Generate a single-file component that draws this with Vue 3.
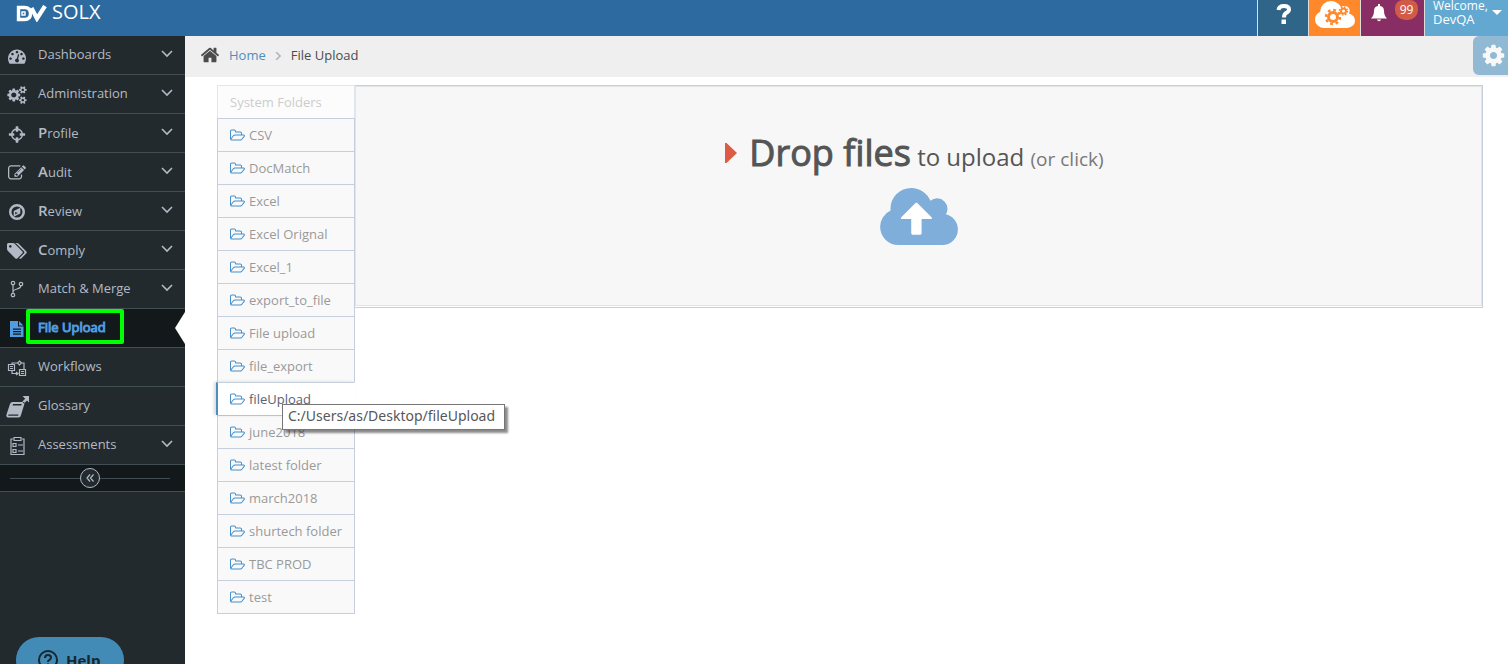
<script setup>
const icons = {
  dash: { box: '0 0 1792 1792', w: 18, h: 18, d: 'M384 1152q0-53-37.5-90.5t-90.5-37.5-90.5 37.5-37.5 90.5 37.5 90.5 90.5 37.5 90.5-37.5 37.5-90.5zm192-448q0-53-37.5-90.5t-90.5-37.5-90.5 37.5-37.5 90.5 37.5 90.5 90.5 37.5 90.5-37.5 37.5-90.5zm428 481l101-382q6-26-7.5-48.5t-38.5-29.5-48 6.5-30 39.5l-101 382q-60 5-107 43.5t-63 98.5q-20 77 20 146t117 89 146-20 89-117q16-60-6-117t-72-91zm660-33q0-53-37.5-90.5t-90.5-37.5-90.5 37.5-37.5 90.5 37.5 90.5 90.5 37.5 90.5-37.5 37.5-90.5zm-640-640q0-53-37.5-90.5t-90.5-37.5-90.5 37.5-37.5 90.5 37.5 90.5 90.5 37.5 90.5-37.5 37.5-90.5zm448 192q0-53-37.5-90.5t-90.5-37.5-90.5 37.5-37.5 90.5 37.5 90.5 90.5 37.5 90.5-37.5 37.5-90.5zm320 448q0 261-141 483-19 29-54 29h-1402q-35 0-54-29-141-221-141-483 0-182 71-348t191-286 286-191 348-71 348 71 286 191 191 286 71 348z' },
  cogs: { box: '0 0 1920 1792', w: 20, h: 18, d: 'M896 896q0-106-75-181t-181-75-181 75-75 181 75 181 181 75 181-75 75-181zm768 512q0-52-38-90t-90-38-90 38-38 90q0 53 37.5 90.5t90.5 37.5 90.5-37.5 37.5-90.5zm0-1024q0-52-38-90t-90-38-90 38-38 90q0 53 37.5 90.5t90.5 37.5 90.5-37.5 37.5-90.5zm-384 421v185q0 10-7 19.5t-16 10.5l-155 24q-11 35-32 76 34 48 90 115 7 11 7 20 0 12-7 19-23 30-82.5 89.5t-78.5 59.5q-11 0-21-7l-115-90q-37 19-77 31-11 108-23 155-7 24-30 24h-186q-11 0-20-7.5t-10-17.5l-23-153q-34-10-75-31l-118 89q-7 7-20 7-11 0-21-8-144-133-144-160 0-9 7-19 10-14 41-53t47-61q-23-44-35-82l-152-24q-10-1-17-9.5t-7-19.500v-185q0-10 7-19.500t16-10.500l155-24q11-35 32-76-34-48-90-115-7-11-7-20 0-12 7-20 22-30 82-89t79-59q11 0 21 7l115 90q34-18 77-32 11-108 23-154 7-24 30-24h186q11 0 20 7.500t10 17.500l23 153q34 10 75 31l118-89q8-7 20-7 11 0 21 8 144 133 144 160 0 8-7 19-12 16-42 54t-45 60q23 48 34 82l152 23q10 2 17 10.500t7 19.500zm640 533v140q0 16-149 31-12 27-30 52 51 113 51 138 0 4-4 7-122 71-124 71-8 0-46-47t-52-68q-20 2-30 2t-30-2q-14 21-52 68t-46 47q-2 0-124-71-4-3-4-7 0-25 51-138-18-25-30-52-149-15-149-31v-140q0-16 149-31 13-29 30-52-51-113-51-138 0-4 4-7 4-2 35-20t59-34 30-16q8 0 46 46.500t52 67.500q20-2 30-2t30 2q51-71 92-112l6-2q4 0 124 70 4 3 4 7 0 25-51 138 17 23 30 52 149 15 149 31zm0-1024v140q0 16-149 31-12 27-30 52 51 113 51 138 0 4-4 7-122 71-124 71-8 0-46-47t-52-68q-20 2-30 2t-30-2q-14 21-52 68t-46 47q-2 0-124-71-4-3-4-7 0-25 51-138-18-25-30-52-149-15-149-31v-140q0-16 149-31 13-29 30-52-51-113-51-138 0-4 4-7 4-2 35-20t59-34 30-16q8 0 46 46.500t52 67.500q20-2 30-2t30 2q51-71 92-112l6-2q4 0 124 70 4 3 4 7 0 25-51 138 17 23 30 52 149 15 149 31z' },
  cross: { box: '-64 0 1664 1792', w: 18, h: 19, d: 'M1197 1024h-109q-26 0-45-19t-19-45v-128q0-26 19-45t45-19h109q-32-108-112.5-188.500t-188.500-112.500v109q0 26-19 45t-45 19h-128q-26 0-45-19t-19-45v-109q-108 32-188.500 112.500t-112.500 188.500h109q26 0 45 19t19 45v128q0 26-19 45t-45 19h-109q32 108 112.500 188.500t188.500 112.500v-109q0-26 19-45t45-19h128q26 0 45 19t19 45v109q108-32 188.500-112.500t112.500-188.500zm339-192v128q0 26-19 45t-45 19h-143q-37 161-154.500 278.500t-278.500 154.500v143q0 26-19 45t-45 19h-128q-26 0-45-19t-19-45v-143q-161-37-278.500-154.500t-154.500-278.500h-143q-26 0-45-19t-19-45v-128q0-26 19-45t45-19h143q37-161 154.500-278.500t278.500-154.500v-143q0-26 19-45t45-19h128q26 0 45 19t19 45v143q161 37 278.500 154.500t154.500 278.500h143q26 0 45 19t19 45z' },
  edit: { box: '0 0 1792 1792', w: 18, h: 18, d: 'M888 1184l116-116-152-152-116 116v56h96v96h56zm440-720q-16-16-33 1l-350 350q-17 17-1 33t33-1l350-350q17-17 1-33zm80 594v190q0 119-84.500 203.500t-203.500 84.500h-832q-119 0-203.500-84.500t-84.500-203.500v-832q0-119 84.500-203.500t203.500-84.500h832q63 0 117 25 15 7 18 23 3 17-9 29l-49 49q-14 14-32 8-23-6-45-6h-832q-66 0-113 47t-47 113v832q0 66 47 113t113 47h832q66 0 113-47t47-113v-126q0-13 9-22l64-64q15-15 35-7t20 29zm-96-738l288 288-672 672h-288v-288zm444 132l-92 92-288-288 92-92q28-28 68-28t68 28l152 152q28 28 28 68t-28 68z' },
  compass: { box: '0 0 18 18', w: 18, h: 18, d: 'M9 1A8 8 0 1 0 9 17 8 8 0 1 0 9 1zM9 3.500A5.500 5.500 0 1 1 9 14.500 5.500 5.500 0 1 1 9 3.500zM12.300 4.800v5.800l-6.600 3.200V8zM7.200 8.900v2.600L9.800 10z' },
  tags: { box: '0 128 1920 1536', w: 20, h: 16, d: 'M448 448q0-53-37.500-90.500t-90.500-37.500-90.500 37.500-37.500 90.500 37.500 90.500 90.500 37.500 90.500-37.500 37.500-90.500zm1067 576q0 53-37 90l-491 492q-39 37-91 37-53 0-90-37l-715-716q-38-37-64.500-101t-26.500-117v-416q0-52 38-90t90-38h416q53 0 117 26.500t102 64.500l715 714q37 39 37 91zm384 0q0 53-37 90l-491 492q-39 37-91 37-36 0-59-14t-53-45l470-470q37-37 37-90 0-52-37-91l-715-714q-38-38-102-64.500t-117-26.500h224q53 0 117 26.500t102 64.500l715 714q37 39 37 91z' },
  fork: { box: '0 0 18 20', w: 18, h: 20, line: 'M5 4v10M5 12q0-2 4-3t4-4M3.300 3a1.700 1.700 0 1 0 3.400 0a1.700 1.700 0 1 0-3.400 0M3.300 15a1.700 1.700 0 1 0 3.400 0a1.700 1.700 0 1 0-3.400 0M11.300 4a1.700 1.700 0 1 0 3.400 0a1.700 1.700 0 1 0-3.400 0' },
  file: { box: '0 0 18 18', w: 18, h: 18, d: 'M2 1h8v5.500h5.500V17H2zM11 1l4.500 4.500H11zM5 8.500v1.200h8V8.500zM5 11v1.200h8V11zM5 13.500v1.200h8v-1.200z' },
  flow: { box: '0 0 20 18', w: 20, h: 18, line: 'M1.500 5.500h6v6h-6zM3 7.500h3M3 9.500h3M12.500 10.500h6v6h-6zM14 12.500h3M14 14.500h3M12.500 2L14.500 4 12.500 6 10.500 4zM5 5V4h5M15 4h2v6M5 12v2.500h5M9 13l2 1.500L9 16' },
  book: { box: '0 0 24 24', w: 24, h: 24, d: 'M7.500 7h11q1.500 0 1 1.500L16 20q-.5 2.500-2.500 2.500H3Q.8 22 1.500 19.500l3.500-10.500Q5.700 7 7.500 7zM8 9l-.5 1.500h8.800l.5-1.500zM3.500 19.500l-.4 1.300h10l.4-1.300zM17.500 1H24v6.500l-2-2-3 3-1.800-1.800 3-3z' },
  list: { box: '0 0 18 20', w: 18, h: 20, line: 'M5 3H3v15.500h13V3h-2M6 1.500h7v3H6zM5 7.500h3v3H5zM5 13.500h3v3H5zM10 9h5M10 15h5' },
  folder: 'M1781 1000q0-35-53-35h-1088q-40 0-85.500 21.500t-71.500 52.500l-294 363q-18 24-18 40 0 35 53 35h1088q40 0 86-22t71-53l294-363q18-22 18-39zm-1141-163h768v-160q0-40-28-68t-68-28h-576q-40 0-68-28t-28-68v-64q0-40-28-68t-68-28h-320q-40 0-68 28t-28 68v853l256-315q44-53 116-87.500t140-34.500zm1269 163q0 62-46 120l-295 363q-43 53-116 87.500t-140 34.500h-1088q-92 0-158-66t-66-158v-960q0-92 66-158t158-66h320q92 0 158 66t66 158v32h544q92 0 158 66t66 158v160h192q54 0 99 24.500t67 70.500q15 32 15 68z',
  home: 'M1472 992v480q0 26-19 45t-45 19h-384v-384h-256v384h-384q-26 0-45-19t-19-45v-480q0-1 .5-3t.5-3l575-474 575 474q1 2 1 6zm223-69l-62 74q-8 9-21 11h-3q-13 0-21-7l-692-577-692 577q-12 8-24 7-13-2-21-11l-62-74q-8-10-7-23.500t11-21.500l719-599q32-26 76-26t76 26l244 204v-195q0-14 9-23t23-9h192q14 0 23 9t9 23v408l219 182q10 8 11 21.500t-7 23.500z',
  cog: 'M1152 896q0-106-75-181t-181-75-181 75-75 181 75 181 181 75 181-75 75-181zm512-109v222q0 12-8 23t-20 13l-185 28q-19 54-39 91 35 50 107 138 10 12 10 25t-9 23q-27 37-99 108t-94 71q-12 0-26-9l-138-108q-44 23-91 38-16 136-29 186-7 28-36 28h-222q-14 0-24.500-8.500t-11.500-21.500l-28-184q-49-16-90-37l-141 107q-10 9-25 9-14 0-25-11-126-114-165-168-7-10-7-23 0-12 8-23 15-21 51-66.500t54-70.500q-27-50-41-99l-183-27q-13-2-21-12.500t-8-23.500v-222q0-12 8-23t19-13l186-28q14-46 39-92-40-57-107-138-10-12-10-24 0-10 9-23 26-36 98.500-107.500t94.500-71.500q13 0 26 10l138 107q44-23 91-38 16-136 29-186 7-28 36-28h222q14 0 24.500 8.500t11.500 21.500l28 184q49 16 90 37l142-107q9-9 24-9 13 0 25 10 129 119 165 170 7 8 7 22 0 12-8 23-15 21-51 66.500t-54 70.500q26 50 41 98l183 28q13 2 21 12.500t8 23.500z',
  cloud: 'M1920 1152q0 159-112.500 271.500t-271.500 112.500h-1088q-185 0-316.500-131.500t-131.500-316.500q0-130 70-240t188-165q-2-30-2-43 0-212 150-362t362-150q156 0 285.500 87t188.500 231q71-62 166-62 106 0 181 75t75 181q0 76-41 138 130 31 213.500 135.500t83.500 238.500z'
}

const nav = [
  { label: 'Dashboards', icon: 'dash', sub: true },
  { label: 'Administration', icon: 'cogs', sub: true },
  { key: 'P', label: 'rofile', icon: 'cross', sub: true },
  { key: 'A', label: 'udit', icon: 'edit', sub: true },
  { key: 'R', label: 'eview', icon: 'compass', sub: true },
  { key: 'C', label: 'omply', icon: 'tags', sub: true },
  { label: 'Match & Merge', icon: 'fork', sub: true },
  { label: 'File Upload', icon: 'file', active: true },
  { label: 'Workflows', icon: 'flow' },
  { label: 'Glossary', icon: 'book' },
  { label: 'Assessments', icon: 'list', sub: true }
]

const folders = ['CSV', 'DocMatch', 'Excel', 'Excel Orignal', 'Excel_1', 'export_to_file', 'File upload', 'file_export', 'fileUpload', 'june2018', 'latest folder', 'march2018', 'shurtech folder', 'TBC PROD', 'test']
</script>

<template>
  <div class="page">
    <header class="topbar">
      <a class="brand" href="#">
        <svg width="31" height="17" viewBox="0 0 31 17" fill="none" stroke="#fff" aria-hidden="true">
          <path d="M2.500 14.500v-12h6q6 0 6 6t-6 6z" stroke-width="3.400" />
          <path d="M6 7h3v3H6z" stroke-width="1.400" />
          <path d="M15.500 3l5.500 10.500L29 1" stroke-width="4.200" />
        </svg>
        <span>SOLX</span>
      </a>
      <div class="tools">
        <button class="tool help-tool" aria-label="Help topics">
          <svg width="16" height="22" viewBox="0 0 16 22"><path d="M2.500 7q.5-4 5.500-4 5 0 5 3.500 0 2-2.500 3.300T8 14.500" fill="none" stroke="#fff" stroke-width="4" /><path d="M5.500 16.500H10V21H5.500z" fill="#fff" /></svg>
        </button>
        <button class="tool cloud-tool" aria-label="Cloud jobs">
          <svg width="40" height="27" viewBox="0 128 1920 1408" preserveAspectRatio="none"><path :d="icons.cloud" fill="#fff" /></svg>
          <svg class="cloud-cogs" width="26" height="24" viewBox="0 0 26 24" fill="none" stroke="#ff892a">
            <circle cx="10" cy="14" r="4.500" stroke-width="3" /><circle cx="10" cy="14" r="7" stroke-width="2.500" stroke-dasharray="2.750" />
            <circle cx="20.500" cy="8" r="2.500" stroke-width="2" /><circle cx="20.500" cy="8" r="4" stroke-width="1.500" stroke-dasharray="1.570" />
          </svg>
        </button>
        <button class="tool bell-tool" aria-label="Notifications, 99">
          <svg width="16" height="18" viewBox="0 0 16 18" fill="#fff"><path d="M7 0h2v2q4 .7 4 5 0 5 3 7.500H0Q3 12 3 7q0-4.300 4-5zM6 15.500h4q-.3 1.700-2 1.700t-2-1.700z" /></svg>
          <span class="badge">99</span>
        </button>
        <button class="tool user-tool">
          <span class="who"><span>Welcome,</span><span class="name">DevQA</span></span>
          <svg width="10" height="5" viewBox="0 0 10 5" fill="#fff"><path d="M0 0h10L5 5z" /></svg>
        </button>
      </div>
    </header>

    <div class="body">
      <aside class="sidebar">
        <nav>
          <a v-for="n in nav" :key="n.icon" href="#" class="item" :class="{ active: n.active }">
            <span class="icon">
              <svg :width="icons[n.icon].w" :height="icons[n.icon].h" :viewBox="icons[n.icon].box" aria-hidden="true">
                <path v-if="icons[n.icon].d" :d="icons[n.icon].d" fill="currentColor" fill-rule="evenodd" />
                <path v-else :d="icons[n.icon].line" fill="none" stroke="currentColor" stroke-width="1.200" />
              </svg>
            </span>
            <span class="label"><b v-if="n.key">{{ n.key }}</b>{{ n.label }}</span>
            <svg v-if="n.sub" class="chev" width="12" height="8" viewBox="0 0 12 8" aria-hidden="true"><path d="M1 1l5 5 5-5" fill="none" stroke="currentColor" stroke-width="1.600" /></svg>
            <span v-if="n.active" class="marker"></span>
          </a>
        </nav>
        <div class="collapse">
          <button aria-label="Collapse menu">
            <svg width="10" height="10" viewBox="0 0 10 10" fill="none" stroke="currentColor" stroke-width="1.200"><path d="M5 1.500L2 5l3 3.500M8.500 1.500l-3 3.500 3 3.500" /></svg>
          </button>
        </div>
      </aside>

      <main>
        <div class="crumbs">
          <svg width="20" height="20" viewBox="64 0 1664 1792" aria-hidden="true"><path :d="icons.home" fill="#4c4c4c" /></svg>
          <a href="#">Home</a>
          <svg class="sep" width="6" height="8" viewBox="0 0 6 8" aria-hidden="true"><path d="M1 0l4 4-4 4" fill="none" stroke="#b2b6bf" stroke-width="1.600" /></svg>
          <span>File Upload</span>
          <button class="settings" aria-label="Settings"><svg width="25" height="25" viewBox="0 0 1792 1792"><path :d="icons.cog" fill="#f8f8f8" /></svg></button>
        </div>

        <div class="content">
          <ul class="folders">
            <li class="title">System Folders</li>
            <li v-for="f in folders" :key="f" :class="{ current: f === 'fileUpload' }">
              <a href="#">
                <svg width="15" height="14" viewBox="0 128 1920 1536" aria-hidden="true"><path :d="icons.folder" fill="#478fca" /></svg>
                <span>{{ f }}</span>
              </a>
              <span v-if="f === 'fileUpload'" class="tip" role="tooltip">C:/Users/as/Desktop/fileUpload</span>
            </li>
          </ul>
          <div class="pane">
            <label class="drop">
              <input type="file" multiple />
              <span class="message">
                <svg class="caret" width="12" height="20" viewBox="0 0 12 20" aria-hidden="true"><path d="M0 0h1.500L12 10 1.500 20H0z" fill="#dd5a43" /></svg>
                <span><span class="big">Drop files</span> to upload <span class="small">(or click)</span></span>
              </span>
              <svg class="upload" width="78" height="57" viewBox="0 128 1920 1408" aria-hidden="true">
                <path :d="icons.cloud" fill="#7eaed9" />
                <path d="M874 500q22-22 44 0l352 352q22 24-2 44H1024v352q0 32-32 32H800q-32 0-32-32V896H522q-22-20 0-44z" fill="#fff" />
              </svg>
            </label>
          </div>
        </div>
      </main>
    </div>

    <div class="highlight"></div>
    <button class="help">
      <svg width="20" height="20" viewBox="0 0 20 20" fill="none" stroke="#18262d" stroke-width="2" aria-hidden="true"><circle cx="10" cy="10" r="9" /><path d="M7 8q0-3 3-3t3 2.500q0 1.500-1.500 2.300T10 12M10 13.500v2" /></svg>
      <span>Help</span>
    </button>
  </div>
</template>

<style>
html, body, #app { height: 100%; }
body { margin: 0; overflow: hidden; }
</style>

<style scoped>
.page { position: relative; display: flex; flex-direction: column; height: 100%; overflow: hidden; background: #fff; font: 13px/20px "Open Sans", "Noto Sans", sans-serif; color: #4c4c4c; }
* { box-sizing: border-box; }
a { color: inherit; text-decoration: none; }
button { border: 0; margin: 0; padding: 0; font: inherit; color: inherit; background: none; cursor: pointer; }
svg { display: block; flex: none; }
.topbar { display: flex; justify-content: space-between; height: 36px; flex: none; background: #2c6aa0; color: #fff; }
.brand { display: flex; align-items: center; gap: 5px; height: 24px; padding-left: 16px; font-size: 20px; line-height: 24px; }
.brand svg { margin-top: 2px; }
.tools { display: flex; }
.tool { display: flex; border-left: 1px solid #ddd; color: #fff; }
.help-tool { width: 51px; padding-left: 18px; padding-top: 3px; background: #2e6589; }
.cloud-tool { position: relative; width: 52px; padding: 1px 0 0 6px; background: #ff892a; }
.cloud-cogs { position: absolute; left: 14px; top: 3px; }
.bell-tool { width: 64px; padding: 4px 0 0 10px; gap: 8px; background: #892e65; }
.badge { width: 23px; height: 20px; margin-top: -4px; border-radius: 8px 8px 10px 10px; background: #d15b47; font-size: 12px; line-height: 20px; text-align: center; }
.user-tool { width: 84px; padding-left: 8px; gap: 4px; background: #62a8d1; text-align: left; }
.user-tool svg { margin-top: 10px; }
.who { display: flex; flex-direction: column; font-size: 12px; line-height: 12px; }
.name { font-size: 13px; line-height: 14px; }
.body { display: flex; flex: 1; min-height: 0; }
.sidebar { width: 185px; flex: none; background: #222a2d; color: #b3bac6; }
.item { position: relative; display: flex; align-items: center; height: 39px; border-bottom: 1px solid #414e53; padding-right: 12px; }
.icon { display: flex; justify-content: center; width: 34px; padding-top: 2px; flex: none; }
.label { flex: 1; margin-left: 4px; margin-top: -2px; }
.label b { font-size: 15px; font-weight: 600; }
.chev { margin-top: -2px; }
.active { background: #13191b; color: #519be0; }
.active .label { -webkit-text-stroke: 1px currentColor; }
.marker { position: absolute; right: 0; top: 3px; border: 16px solid transparent; border-left: 0; border-right: 10px solid #fff; }
.collapse { display: flex; align-items: center; height: 27px; padding: 0 15px 0 10px; background: #13191b; border-bottom: 1px solid #414e53; }
.collapse::before, .collapse::after { content: ""; flex: 1; height: 1px; background: #414e53; }
.collapse button { display: flex; align-items: center; justify-content: center; width: 20px; height: 20px; border: 1px solid #b3bac6; border-radius: 50%; background: #222a2d; }
main { flex: 1; min-width: 0; }
.crumbs { position: relative; display: flex; align-items: center; height: 41px; padding: 0 0 4px 15px; background: #efefef; }
.crumbs a { margin-left: 9px; color: #4c8fbd; }
.sep { margin: 2px 10px 0 9px; }
.settings { display: flex; align-items: center; justify-content: flex-end; position: absolute; right: 0; top: 0; width: 35px; height: 39px; padding-right: 2px; border-radius: 6px 0 0 6px; background: #92b9d4; }
.content { display: flex; align-items: flex-start; padding: 8px 25px 0 32px; }
.folders { position: relative; z-index: 2; width: 138px; flex: none; margin: 0; padding: 0; list-style: none; color: #999; border-bottom: 1px solid #c5d0dc; }
.folders li { position: relative; height: 33px; border: 1px solid #c5d0dc; border-bottom: 0; background: #f9f9f9; }
.folders a { display: flex; align-items: center; gap: 4px; height: 32px; padding: 0 12px; white-space: nowrap; }
.folders .title { padding: 6px 12px; background: #fcfcfc; border-color: #e2e7ed; color: #ccc; }
.folders .current { margin-left: -1px; border-left: 2px solid #4c8fbd; border-right-color: transparent; background: #fff; color: #576373; box-shadow: -2px 0 3px rgba(0, 0, 0, .15); z-index: 2; }
.tip { position: absolute; left: 64px; top: 21px; z-index: 3; padding: 1px 9px 3px 5px; border: 1px solid #767676; background: #fff; box-shadow: 3px 3px 2px rgba(0, 0, 0, .45); color: #575757; font: 14px/20px "Noto Sans", "Open Sans", sans-serif; white-space: nowrap; }
.pane { flex: 1; margin-left: -1px; padding-bottom: 1px; border: 1px solid #c5d0dc; position: relative; z-index: 1; }
.drop { display: flex; flex-direction: column; align-items: center; height: 220px; padding: 41px 0 0; border: 1px solid #e3e4e6; background: #f7f7f7; cursor: pointer; }
.drop input { position: absolute; width: 1px; height: 1px; opacity: 0; }
.message { display: flex; align-items: center; gap: 12px; padding-right: 8px; font-size: 24px; line-height: 50px; white-space: nowrap; color: #555; }
.caret { margin-bottom: 6px; }
.big { font-size: 36px; -webkit-text-stroke: 1px currentColor; }
.small { font-size: 19px; color: #777; }
.upload { margin-top: 4px; }
.highlight { position: absolute; left: 26px; top: 309px; width: 98px; height: 35px; border: 4px solid #0f0; border-radius: 2px; }
.help { position: absolute; left: 16px; top: 637px; display: flex; align-items: center; gap: 8px; width: 108px; height: 46px; padding-left: 22px; border-radius: 23px; background: #428bb7; color: #18262d; font-size: 15px; font-weight: 700; }
</style>
